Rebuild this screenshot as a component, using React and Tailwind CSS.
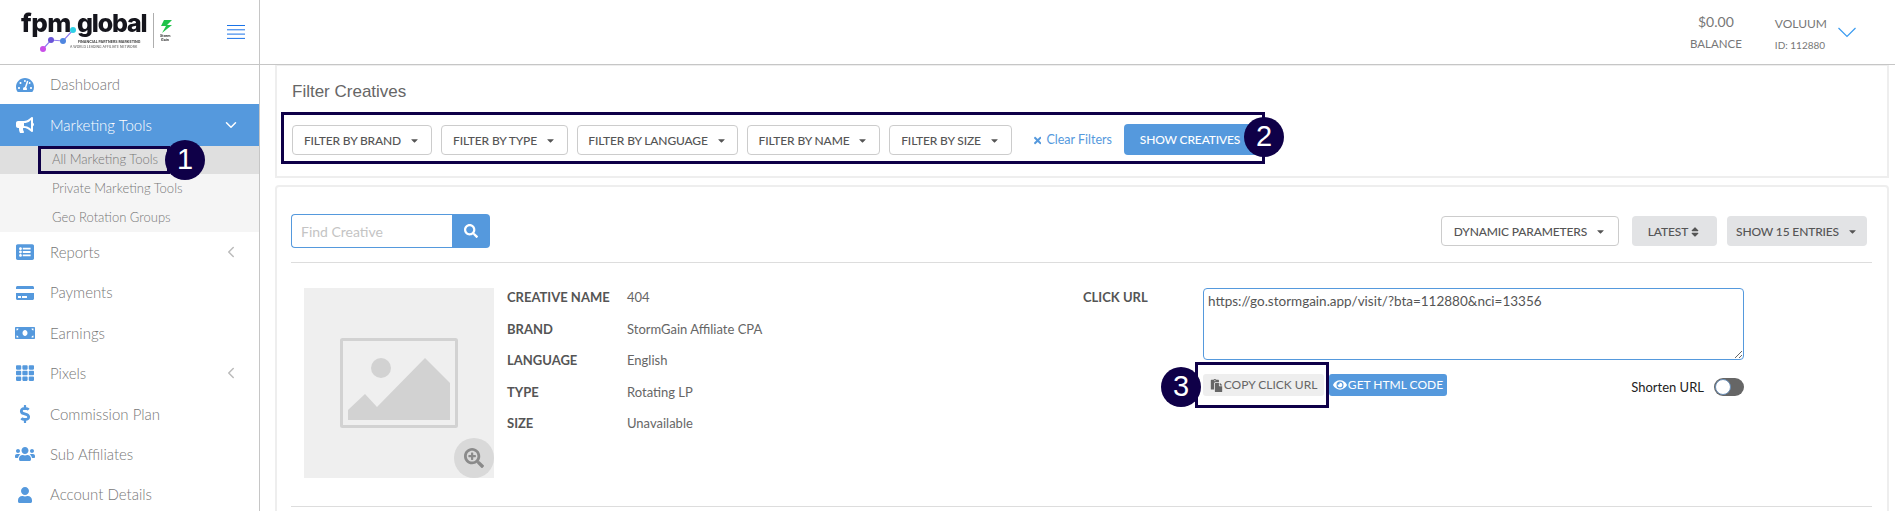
import React from "react";
import {
  FaTachometerAlt,
  FaBullhorn,
  FaListAlt,
  FaCreditCard,
  FaMoneyBill,
  FaTh,
  FaDollarSign,
  FaUsers,
  FaUser,
  FaSearch,
  FaSearchPlus,
  FaEye,
  FaPaste,
  FaTimes,
  FaSort,
  FaCaretDown,
} from "react-icons/fa";
import { FiChevronDown, FiChevronLeft } from "react-icons/fi";

const Logo = () => (
  <svg width="190" height="64" viewBox="0 0 190 64" className="blur-[0.4px]">
    <text x="21" y="32" fontFamily="Inter" fontWeight="800" fontSize="26" letterSpacing="-0.5" fill="#15151c">fpm</text>
    <text x="77" y="32" fontFamily="Inter" fontWeight="800" fontSize="25" letterSpacing="-1.2" fill="#15151c">global</text>
    <polyline points="43,49 51,40 63,41 73,30" fill="none" stroke="#8f7cf0" strokeWidth="1.2" />
    <circle cx="43" cy="49" r="3" fill="#c94fe8" />
    <circle cx="51" cy="40" r="3" fill="#6a55d8" />
    <circle cx="63" cy="41" r="3" fill="#4f86e0" />
    <circle cx="73" cy="30" r="3" fill="#2fd0e6" />
    <text x="78" y="43" fontFamily="Inter" fontWeight="700" fontSize="3.6" fill="#444">FINANCIAL PARTNERS MARKETING</text>
    <text x="70" y="47.5" fontFamily="Inter" fontWeight="500" fontSize="3.4" fill="#666">A WORLD LEADING AFFILIATE NETWORK</text>
    <line x1="153.5" y1="13" x2="153.5" y2="48" stroke="#999" strokeWidth="0.8" />
    <path d="M172 20 L164 20 L161 26 L166 26 L162 33 L172 25 L167 25 Z" fill="#1fc24a" />
    <text x="160" y="37" fontFamily="Inter" fontWeight="700" fontSize="3.6" fill="#333">Storm</text>
    <text x="161" y="41" fontFamily="Inter" fontWeight="700" fontSize="3.6" fill="#333">Gain</text>
  </svg>
);

const NavRow = ({ icon: Icon, label, arrow, iconClass = "text-[18px]" }) => (
  <div className="flex h-[40.4px] items-center">
    <span className="flex w-[50px] justify-center text-[#5599dd]">
      <Icon className={iconClass} />
    </span>
    <span className="flex-1 text-[15px] font-light text-[#777]">{label}</span>
    {arrow && <FiChevronLeft className="mr-[19px] text-[18px] text-[#bbb]" />}
  </div>
);

const FilterButton = ({ label, width }) => (
  <button className={`flex h-[30px] items-center justify-center gap-[8px] rounded-[4px] border border-[#ccc] bg-white pt-[1px] text-[12px] font-medium tracking-[-0.15px] text-[#555] ${width}`}>
    {label}
    <FaCaretDown className="text-[11px] text-[#555]" />
  </button>
);

const details = [
  ["CREATIVE NAME", "404"],
  ["BRAND", "StormGain Affiliate CPA"],
  ["LANGUAGE", "English"],
  ["TYPE", "Rotating LP"],
  ["SIZE", "Unavailable"],
];

const Badge = ({ n, className }) => (
  <div className={`absolute flex h-[40px] w-[40px] items-center justify-center rounded-full bg-[#0f0048] font-['Liberation_Sans',sans-serif] text-[29px] text-white ${className}`}>
    {n}
  </div>
);

export default function App() {
  return (
    <div className="relative flex h-[511px] w-[1895px] overflow-hidden bg-white font-[Lato,sans-serif]">
      {/* Sidebar */}
      <aside className="w-[260px] shrink-0 border-r border-[#c6c6c6]">
        <div className="flex h-[65px] items-center justify-between border-b border-[#c6c6c6]">
          <Logo />
          <svg width="18" height="14" viewBox="0 0 18 14" className="mr-[14px] mb-[1px]">
            <path d="M0 .5h18M0 4.8h18M0 9.1h18M0 13.4h18" stroke="#1a73e8" strokeWidth="1" />
          </svg>
        </div>
        <div className="flex h-[39px] items-center">
          <span className="flex w-[50px] justify-center text-[#5599dd]">
            <FaTachometerAlt className="text-[18px]" />
          </span>
          <span className="text-[15px] font-light text-[#777]">Dashboard</span>
        </div>
        <div className="flex h-[42px] items-center bg-[#5599dd] text-white">
          <span className="flex w-[50px] justify-center">
            <FaBullhorn className="text-[18px]" />
          </span>
          <span className="flex-1 text-[15px] font-light">Marketing Tools</span>
          <FiChevronDown className="mr-[19px] text-[18px]" />
        </div>
        <div className="bg-[#f5f5f5] text-[13px] font-light text-[#777]">
          <div className="flex h-[28px] items-center bg-[#dfdfdf] pl-[52px]">All Marketing Tools</div>
          <div className="flex h-[29px] items-center pl-[52px]">Private Marketing Tools</div>
          <div className="flex h-[29px] items-center pl-[52px]">Geo Rotation Groups</div>
        </div>
        <NavRow icon={FaListAlt} label="Reports" arrow />
        <NavRow icon={FaCreditCard} label="Payments" />
        <NavRow icon={FaMoneyBill} label="Earnings" iconClass="text-[20px]" />
        <NavRow icon={FaTh} label="Pixels" arrow />
        <NavRow icon={FaDollarSign} label="Commission Plan" />
        <NavRow icon={FaUsers} label="Sub Affiliates" iconClass="text-[20px]" />
        <NavRow icon={FaUser} label="Account Details" iconClass="text-[16px]" />
      </aside>

      <div className="min-w-0 flex-1">
        {/* Header */}
        <header className="flex h-[65px] items-center justify-end border-b border-[#c6c6c6]">
          <div className="mr-[33px] flex flex-col items-center text-[#777]">
            <span className="text-[14px] leading-[20px]">$0.00</span>
            <span className="mt-[3px] text-[11.5px] leading-[18px]">BALANCE</span>
          </div>
          <div className="flex flex-col pt-[4px] text-[#777]">
            <span className="text-[12px] leading-[20px]">VOLUUM</span>
            <span className="mt-[2px] text-[10px] leading-[18px]">ID: 112880</span>
          </div>
          <svg width="18" height="11" viewBox="0 0 18 11" className="mr-[39px] ml-[11px]">
            <path d="M.5 1 L9 9.5 L17.5 1" fill="none" stroke="#3a9bf0" strokeWidth="1.2" />
          </svg>
        </header>

        <main className="ml-[15px] mr-[6px]">
          {/* Filter panel */}
          <section className="h-[113px] border-2 border-t border-[#eeeeee] pl-[15px]">
            <h2 className="mt-[14px] font-['Liberation_Sans',sans-serif] text-[17px] leading-[24px] text-[#666]">Filter Creatives</h2>
            <div className="mt-[20px] flex items-center">
              <div className="flex gap-[9px]">
                <FilterButton label="FILTER BY BRAND" width="w-[140px]" />
                <FilterButton label="FILTER BY TYPE" width="w-[127px]" />
                <FilterButton label="FILTER BY LANGUAGE" width="w-[161px]" />
                <FilterButton label="FILTER BY NAME" width="w-[133px]" />
                <FilterButton label="FILTER BY SIZE" width="w-[123px]" />
              </div>
              <button className="ml-[22px] flex w-[78px] items-center gap-[5px] whitespace-nowrap text-[12.5px] text-[#5599dd]">
                <FaTimes className="text-[11px]" />
                Clear Filters
              </button>
              <button className="ml-[12px] mb-[1px] h-[31px] w-[141px] rounded-[4px] bg-[#5599dd] pr-[9px] text-[12px] font-medium tracking-[-0.15px] text-white">
                SHOW CREATIVES
              </button>
            </div>
          </section>

          {/* Creatives panel */}
          <section className="mt-[7px] h-[340px] rounded-t-[4px] border-2 border-[#eeeeee] pt-[27px] pl-[14px] pr-[15px]">
            <div className="flex items-start justify-between border-b border-[#dddddd] pb-[14px] pr-[5px]">
              <div className="flex h-[34px] w-[199px]">
                <input
                  placeholder="Find Creative"
                  className="h-full w-[161px] rounded-l-[4px] border border-r-0 border-[#5599dd] px-[9px] text-[14px] text-[#555] outline-none placeholder:text-[#c4c4c4]"
                />
                <button className="flex h-full flex-1 items-center justify-center rounded-r-[4px] bg-[#5599dd] text-white">
                  <FaSearch className="text-[14px]" />
                </button>
              </div>
              <div className="mt-[2px] flex">
                <button className="flex h-[30px] w-[178px] items-center justify-center gap-[8px] rounded-[4px] border border-[#ccc] pt-[1px] text-[12px] font-medium tracking-[-0.15px] text-[#555]">
                  DYNAMIC PARAMETERS
                  <FaCaretDown className="text-[11px]" />
                </button>
                <button className="ml-[13px] flex h-[30px] w-[85px] items-center justify-center gap-[1px] rounded-[4px] bg-[#e2e3e5] pt-[1px] text-[12px] font-medium tracking-[-0.15px] text-[#555]">
                  LATEST
                  <FaSort className="text-[12px]" />
                </button>
                <button className="ml-[10px] flex h-[30px] w-[140px] items-center justify-center gap-[8px] rounded-[4px] bg-[#e2e3e5] pt-[1px] text-[12px] font-medium tracking-[-0.15px] text-[#555]">
                  SHOW 15 ENTRIES
                  <FaCaretDown className="text-[11px]" />
                </button>
              </div>
            </div>

            <div className="flex border-b border-[#dddddd] pt-[25px] pb-[28px] pl-[13px]">
              <div className="relative flex h-[190px] w-[190px] shrink-0 items-center justify-center bg-[#efefef]">
                <svg width="118" height="90" viewBox="0 0 118 90" className="mb-[1px]">
                  <rect x="1.5" y="1.5" width="115" height="87" rx="1" fill="none" stroke="#d2d2d2" strokeWidth="3" />
                  <circle cx="41" cy="30" r="10" fill="#d2d2d2" />
                  <path d="M8 82 V72 L25 56 L37 69 L85 20 L110 45 V82 Z" fill="#d2d2d2" />
                </svg>
                <div className="absolute right-0 bottom-0 flex h-[40px] w-[40px] items-center justify-center rounded-full bg-[#d9d9d9] text-[#8a8a8a]">
                  <FaSearchPlus className="text-[20px]" />
                </div>
              </div>
              <div className="ml-[13px] flex w-[576px] flex-col gap-[13.5px] text-[13px] leading-[18px]">
                {details.map(([label, value]) => (
                  <div key={label} className="flex">
                    <span className="w-[120px] font-bold text-[#555]">{label}</span>
                    <span className="text-[#666]">{value}</span>
                  </div>
                ))}
              </div>
              <div className="w-[120px] text-[13px] font-bold leading-[18px] text-[#555]">CLICK URL</div>
              <div className="w-[541px]">
                <textarea
                  readOnly
                  defaultValue="https://go.stormgain.app/visit/?bta=112880&nci=13356"
                  className="block h-[72px] w-full rounded-[4px] border border-[#5599dd] px-[4px] py-[3px] text-[13.5px] leading-[18px] text-[#555] outline-none"
                />
                <div className="mt-[14px] flex items-start">
                  <button className="flex h-[22px] w-[121px] items-center justify-center gap-[1px] rounded-[3px] bg-[#eeeeee] text-[12px] text-[#666]">
                    <FaPaste className="text-[13px]" />
                    COPY CLICK URL
                  </button>
                  <button className="ml-[5px] flex h-[22px] w-[118px] items-center justify-center gap-[1px] rounded-[3px] bg-[#5599dd] text-[12px] text-white">
                    <FaEye className="text-[14px]" />
                    GET HTML CODE
                  </button>
                  <span className="ml-auto mt-[4px] text-[13px] leading-[18px] text-[#222]">Shorten URL</span>
                  <div className="ml-[10px] mt-[4px] flex h-[18px] w-[30px] items-center rounded-full bg-[#666]">
                    <div className="ml-[1px] h-[16px] w-[16px] rounded-full border border-[#6a8fb8] bg-white" />
                  </div>
                </div>
              </div>
            </div>
          </section>
        </main>
      </div>

      {/* Tutorial annotations over the page */}
      <div className="absolute top-[146px] left-[38px] h-[28px] w-[132px] border-[3px] border-[#0f0048]" />
      <Badge n="1" className="top-[140px] left-[165px]" />
      <div className="absolute top-[112px] left-[281px] h-[52px] w-[984px] border-[3px] border-[#0f0048]" />
      <Badge n="2" className="top-[117px] left-[1244px]" />
      <div className="absolute top-[362px] left-[1195px] h-[46px] w-[134px] border-[3px] border-[#0f0048]" />
      <Badge n="3" className="top-[367px] left-[1161px]" />
    </div>
  );
}
